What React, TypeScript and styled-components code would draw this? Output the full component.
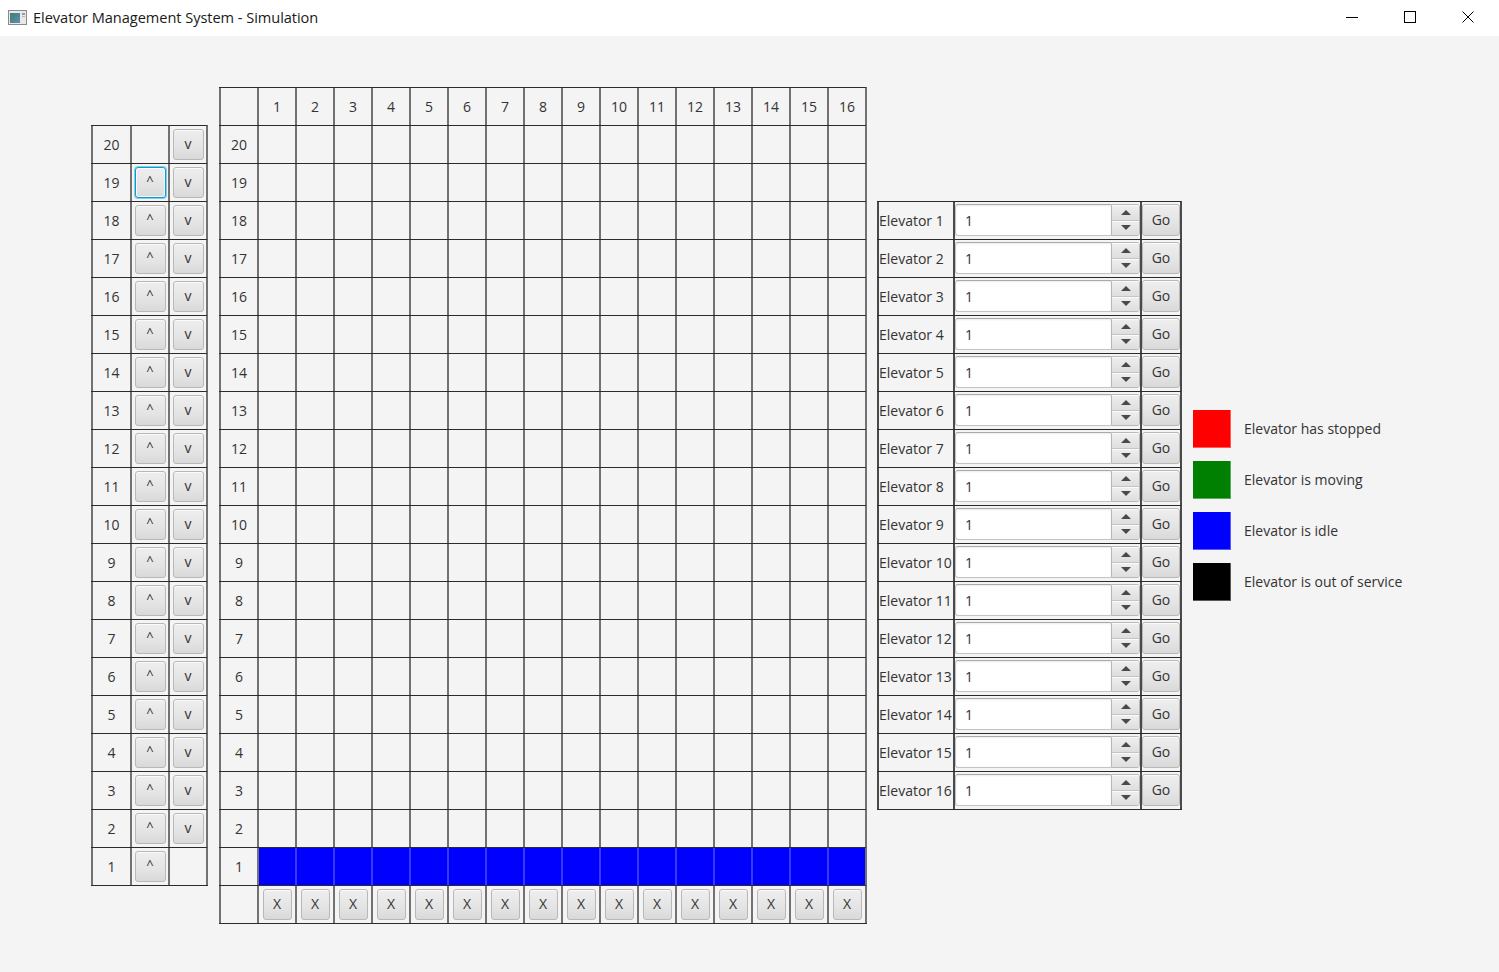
import React from "react";
import styled, { createGlobalStyle, css } from "styled-components";

const GlobalStyle = createGlobalStyle`
  html, body { margin: 0; padding: 0; }
  body {
    background: #f4f4f4;
    font-family: "Open Sans", "Noto Sans", sans-serif;
    color: #333333;
  }
  * { box-sizing: border-box; }
`;

const Frame = styled.div`
  width: 1499px;
  height: 972px;
  display: flex;
  flex-direction: column;
  background: #f4f4f4;
  overflow: hidden;
`;

const TitleBar = styled.div`
  height: 36px;
  flex: none;
  background: #ffffff;
  display: flex;
  align-items: center;
  padding-left: 8px;
  padding-bottom: 2px;
`;

const TitleText = styled.span`
  margin-left: 6px;
  font-size: 14.6px;
  color: #1a1a1a;
  font-family: "Open Sans", sans-serif;
  letter-spacing: -0.05px;
`;

const WindowControls = styled.div`
  margin-left: auto;
  display: flex;
  height: 100%;
  padding-right: 2px;
`;

const ControlButton = styled.div`
  width: 58px;
  height: 100%;
  display: flex;
  align-items: center;
  justify-content: center;
`;

const Stage = styled.div`
  flex: 1;
  display: flex;
  align-items: center;
  padding: 3px 0 0 91px;
`;

const Table = styled.div<{ $ml?: number }>`
  display: flex;
  flex-direction: column;
  flex: none;
  margin-left: ${(p) => p.$ml ?? 0}px;
  border-bottom: 1px solid #2b2b2b;
`;

const Row = styled.div<{ $edge?: string }>`
  display: flex;
  height: 38px;
  border-top: 1px solid #2b2b2b;
  border-right: 2px solid ${(p) => p.$edge ?? "#727272"};
`;

const Cell = styled.div<{ $w: number; $bg?: string; $line?: string; $left?: boolean }>`
  width: ${(p) => p.$w}px;
  flex: none;
  height: 100%;
  border-left: 2px solid ${(p) => p.$line ?? "#727272"};
  background: ${(p) => p.$bg ?? "transparent"};
  display: flex;
  align-items: center;
  justify-content: ${(p) => (p.$left ? "flex-start" : "center")};
  padding-bottom: 1px;
  font-size: 14px;
  color: #333333;
  white-space: nowrap;
  overflow: hidden;
`;

const FxButton = styled.button<{ $w?: number; $h?: number; $focused?: boolean }>`
  width: ${(p) => p.$w ?? 31}px;
  height: ${(p) => p.$h ?? 31}px;
  padding: 0;
  margin: 0;
  border: 1px solid #b8b8b8;
  border-radius: 3px;
  background: linear-gradient(to bottom, #eeeeee 0%, #e4e4e4 60%, #d9d9d9 100%);
  box-shadow: inset 0 1px 0 #fbfbfb;
  font-family: "Open Sans", sans-serif;
  font-size: 14px;
  color: #333333;
  display: flex;
  align-items: center;
  justify-content: center;
  line-height: 1;
  ${(p) =>
    p.$focused &&
    css`
      border: 1px solid #039ed3;
      box-shadow: 0 0 0 1px rgba(3, 158, 211, 0.45), inset 0 0 0 1px #fafafa;
    `}
`;

const Caret = styled.span`
  font-size: 13px;
  transform: translateY(-2px);
`;

const SpinnerBox = styled.div`
  width: 100%;
  height: 32px;
  display: flex;
`;

const SpinnerField = styled.div`
  flex: 1;
  height: 100%;
  background: #ffffff;
  border: 1px solid #c3c3c3;
  border-top-color: #a9a9a9;
  border-right: none;
  border-radius: 3px 0 0 3px;
  box-shadow: inset 0 1px 2px rgba(0, 0, 0, 0.08);
  display: flex;
  align-items: center;
  padding-left: 9px;
  font-size: 14px;
  color: #333333;
`;

const SpinnerArrows = styled.div`
  width: 29px;
  height: 100%;
  display: flex;
  flex-direction: column;
  border: 1px solid #b8b8b8;
  border-radius: 0 3px 3px 0;
  overflow: hidden;
`;

const ArrowBtn = styled.div<{ $top?: boolean }>`
  flex: 1;
  display: flex;
  align-items: center;
  justify-content: center;
  background: linear-gradient(to bottom, #efefef, #dedede);
  box-shadow: inset 0 1px 0 #fafafa;
  ${(p) => p.$top && css`border-bottom: 1px solid #c4c4c4;`}
`;

const Triangle = styled.div<{ $up?: boolean }>`
  width: 0;
  height: 0;
  border-left: 5px solid transparent;
  border-right: 5px solid transparent;
  ${(p) =>
    p.$up
      ? css`border-bottom: 5px solid #4a4a4a;`
      : css`border-top: 5px solid #4a4a4a;`}
`;

const Legend = styled.div`
  display: flex;
  flex-direction: column;
  gap: 13px;
  margin-left: 11px;
`;

const LegendItem = styled.div`
  display: flex;
  align-items: center;
  gap: 13px;
`;

const Swatch = styled.div<{ $c: string }>`
  width: 38px;
  height: 38px;
  background: ${(p) => p.$c};
  box-shadow: inset -1px -1px 0 rgba(255, 255, 255, 0.35);
`;

const LegendText = styled.span`
  font-size: 14px;
  color: #333333;
  padding-bottom: 2px;
`;

const floors = Array.from({ length: 20 }, (_, i) => 20 - i);
const elevators = Array.from({ length: 16 }, (_, i) => i + 1);

const AppIcon = () => (
  <svg width="19" height="15" viewBox="0 0 19 15">
    <defs>
      <linearGradient id="ig" x1="0" y1="0" x2="1" y2="1">
        <stop offset="0" stopColor="#3f7f6a" />
        <stop offset="1" stopColor="#5c8fb8" />
      </linearGradient>
    </defs>
    <rect x="0.5" y="0.5" width="18" height="14" fill="#e8e8e8" stroke="#8a8a8a" />
    <rect x="2" y="3" width="10" height="10" fill="url(#ig)" />
    <rect x="14" y="3" width="3" height="2" fill="#9a9a9a" />
    <rect x="14" y="6" width="3" height="1" fill="#b5b5b5" />
  </svg>
);

const MinIcon = () => (
  <svg width="12" height="12" viewBox="0 0 12 12">
    <line x1="0" y1="6.5" x2="12" y2="6.5" stroke="#000" strokeWidth="1" />
  </svg>
);
const MaxIcon = () => (
  <svg width="12" height="12" viewBox="0 0 12 12">
    <rect x="0.5" y="0.5" width="11" height="11" fill="none" stroke="#000" strokeWidth="1" />
  </svg>
);
const CloseIcon = () => (
  <svg width="12" height="12" viewBox="0 0 12 12">
    <path d="M0.5 0.5 L11.5 11.5 M11.5 0.5 L0.5 11.5" stroke="#000" strokeWidth="1" />
  </svg>
);

const legend = [
  { c: "#ff0000", t: "Elevator has stopped" },
  { c: "#008000", t: "Elevator is moving" },
  { c: "#0000ff", t: "Elevator is idle" },
  { c: "#000000", t: "Elevator is out of service" },
];

export default function App() {
  return (
    <>
      <GlobalStyle />
      <Frame>
        <TitleBar>
          <AppIcon />
          <TitleText>Elevator Management System - Simulation</TitleText>
          <WindowControls>
            <ControlButton>
              <MinIcon />
            </ControlButton>
            <ControlButton>
              <MaxIcon />
            </ControlButton>
            <ControlButton>
              <CloseIcon />
            </ControlButton>
          </WindowControls>
        </TitleBar>
        <Stage>
          <Table>
            {floors.map((f) => (
              <Row key={f}>
                <Cell $w={39}>{f}</Cell>
                <Cell $w={38}>
                  {f !== 20 && (
                    <FxButton $focused={f === 19}>
                      <Caret>^</Caret>
                    </FxButton>
                  )}
                </Cell>
                <Cell $w={38}>{f !== 1 && <FxButton>v</FxButton>}</Cell>
              </Row>
            ))}
          </Table>

          <Table $ml={11}>
            <Row>
              <Cell $w={38} />
              {elevators.map((e) => (
                <Cell key={e} $w={38}>
                  {e}
                </Cell>
              ))}
            </Row>
            {floors.map((f) => (
              <Row key={f}>
                <Cell $w={38}>{f}</Cell>
                {elevators.map((e) => (
                  <Cell
                    key={e}
                    $w={38}
                    $bg={f === 1 ? "#0000ff" : undefined}
                    $line={f === 1 && e !== 1 ? "#3a3aff" : undefined}
                  />
                ))}
              </Row>
            ))}
            <Row>
              <Cell $w={38} />
              {elevators.map((e) => (
                <Cell key={e} $w={38}>
                  <FxButton $w={29}>X</FxButton>
                </Cell>
              ))}
            </Row>
          </Table>

          <Table $ml={10}>
            {elevators.map((e) => (
              <Row key={e} $edge="#4a4a4a">
                <Cell $w={76} $left $line="#4a4a4a">
                  Elevator {e}
                </Cell>
                <Cell $w={187} $line="#4a4a4a">
                  <SpinnerBox>
                    <SpinnerField>1</SpinnerField>
                    <SpinnerArrows>
                      <ArrowBtn $top>
                        <Triangle $up />
                      </ArrowBtn>
                      <ArrowBtn>
                        <Triangle />
                      </ArrowBtn>
                    </SpinnerArrows>
                  </SpinnerBox>
                </Cell>
                <Cell $w={40} $line="#4a4a4a">
                  <FxButton $w={38} $h={32}>
                    Go
                  </FxButton>
                </Cell>
              </Row>
            ))}
          </Table>

          <Legend>
            {legend.map((l) => (
              <LegendItem key={l.t}>
                <Swatch $c={l.c} />
                <LegendText>{l.t}</LegendText>
              </LegendItem>
            ))}
          </Legend>
        </Stage>
      </Frame>
    </>
  );
}
